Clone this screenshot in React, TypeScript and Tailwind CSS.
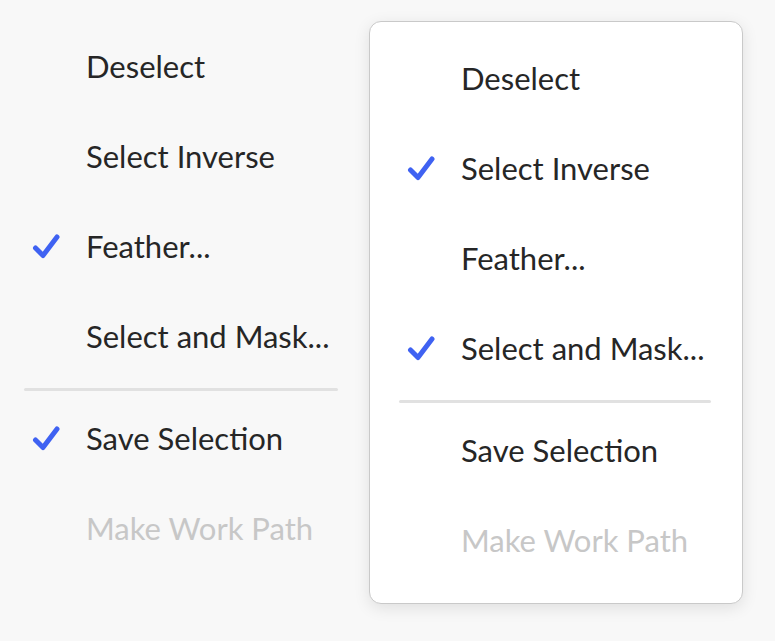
import React from "react";

type Item = { label: string; checked?: boolean; disabled?: boolean };

const leftItems: Item[] = [
  { label: "Deselect" },
  { label: "Select Inverse" },
  { label: "Feather...", checked: true },
  { label: "Select and Mask..." },
];
const leftBottom: Item[] = [
  { label: "Save Selection", checked: true },
  { label: "Make Work Path", disabled: true },
];

const rightItems: Item[] = [
  { label: "Deselect" },
  { label: "Select Inverse", checked: true },
  { label: "Feather..." },
  { label: "Select and Mask...", checked: true },
];
const rightBottom: Item[] = [
  { label: "Save Selection" },
  { label: "Make Work Path", disabled: true },
];

function Check() {
  return (
    <svg width="28" height="26" viewBox="0 0 28 26" className="shrink-0">
      <polyline
        points="3.5,15 11,22.5 25,4"
        fill="none"
        stroke="#3f62f2"
        strokeWidth="5"
        strokeLinecap="round"
        strokeLinejoin="round"
      />
    </svg>
  );
}

function Row({ item }: { item: Item }) {
  return (
    <div className="flex h-[90px] items-center">
      <div className="flex w-[62px] items-center pl-[8px]">{item.checked && <Check />}</div>
      <span
        className={
          item.disabled
            ? "text-[31px] leading-none text-[#c7c7c7]"
            : "text-[31px] leading-none text-[#262626]"
        }
      >
        {item.label}
      </span>
    </div>
  );
}

function Divider() {
  return (
    <div className="h-[12px] pt-[7px]">
      <div className="h-[3px] rounded-full bg-[#e1e1e1]" />
    </div>
  );
}

function Menu({ top, bottom }: { top: Item[]; bottom: Item[] }) {
  return (
    <div className="flex flex-col">
      {top.map((it) => (
        <Row key={it.label} item={it} />
      ))}
      <Divider />
      {bottom.map((it) => (
        <Row key={it.label} item={it} />
      ))}
    </div>
  );
}

export default function App() {
  return (
    <div
      className="flex h-[641px] w-[775px] items-start bg-[#f8f8f8] pt-[21px]"
      style={{ fontFamily: "Lato, 'Open Sans', sans-serif" }}
    >
      <div className="ml-[24px] w-[314px]">
        <Menu top={leftItems} bottom={leftBottom} />
      </div>
      <div className="ml-[31px] w-[374px] rounded-[12px] border border-[#c9c9c9] bg-white pb-[18px] pl-[29px] pr-[31px] pt-[11px] shadow-[0_4px_16px_rgba(0,0,0,0.10)]">
        <Menu top={rightItems} bottom={rightBottom} />
      </div>
    </div>
  );
}
